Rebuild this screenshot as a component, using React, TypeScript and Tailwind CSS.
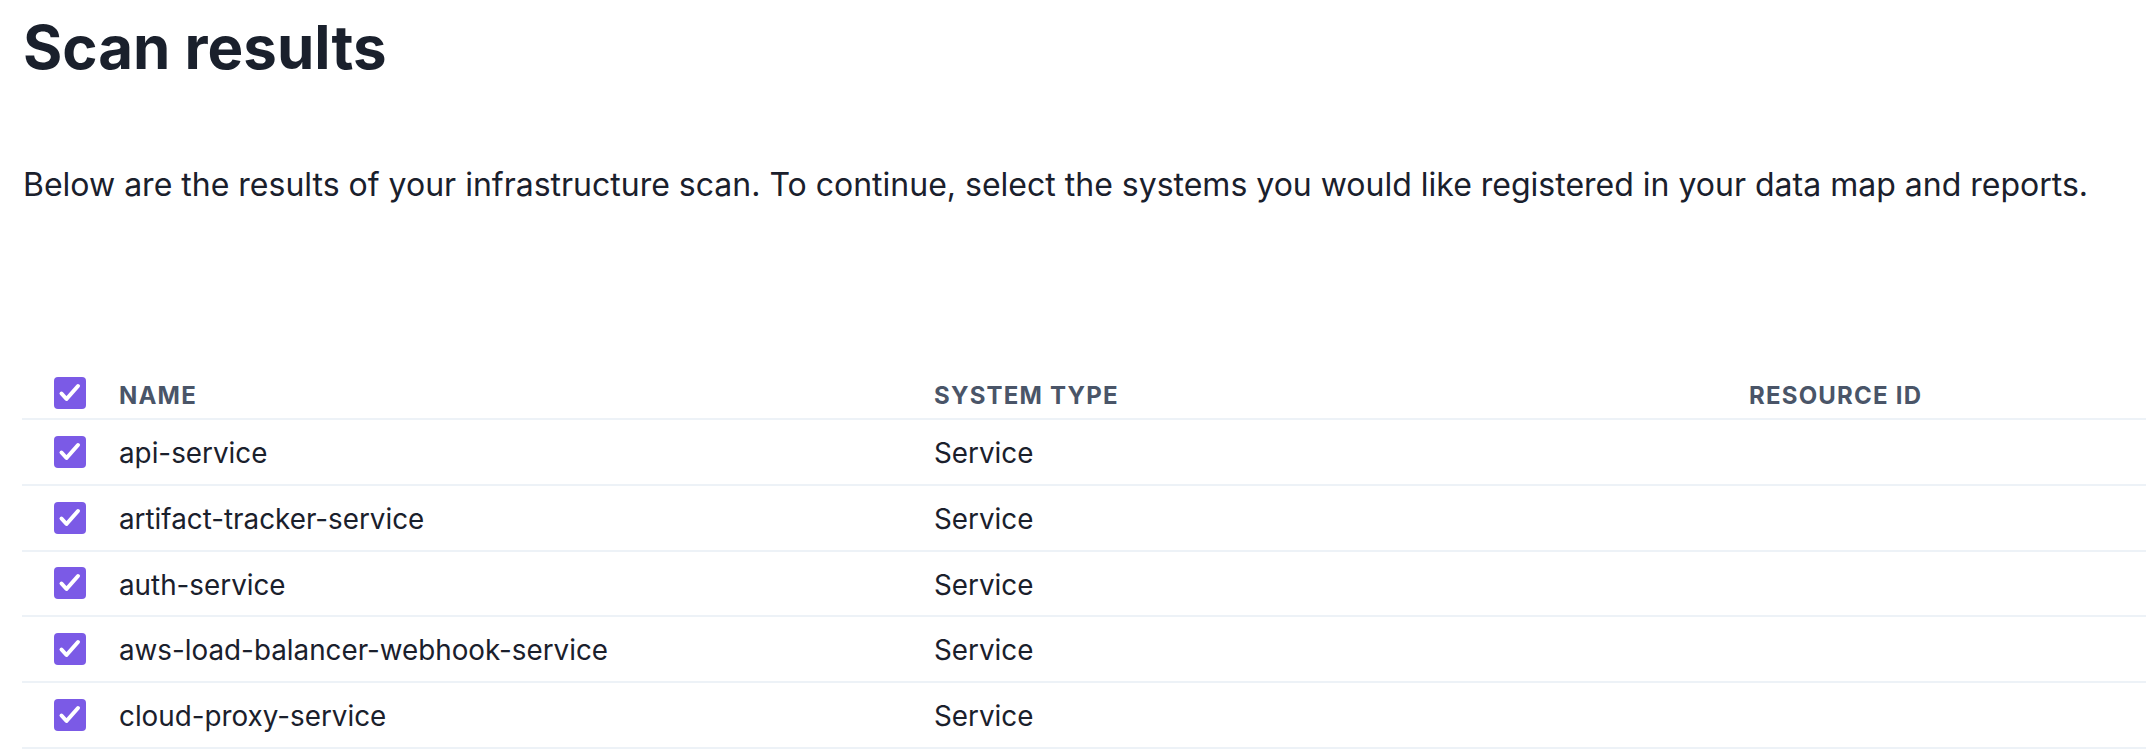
import { Fragment } from 'react';

const systems = [
  'api-service',
  'artifact-tracker-service',
  'auth-service',
  'aws-load-balancer-webhook-service',
  'cloud-proxy-service',
];

function Check() {
  return (
    <span className="flex h-[32px] w-[32px] shrink-0 items-center justify-center rounded-[4px] bg-[#7b5ae6]">
      <svg width="32" height="32" viewBox="0 0 32 32" fill="none">
        <path
          d="M7.5 16.5l5 5.5 11.5-13"
          stroke="white"
          strokeWidth="4"
          strokeLinecap="round"
          strokeLinejoin="round"
        />
      </svg>
    </span>
  );
}

export default function App() {
  return (
    <div className="h-[750px] w-full overflow-hidden bg-white font-['Inter','Liberation_Sans',sans-serif] text-[#1a202c]">
      <div className="pl-[23px]">
        <h1 className="pt-[11px] text-[60px] font-bold leading-[72px]">Scan results</h1>
        <p className="mt-[78px] text-[32px] leading-[48px]">
          Below are the results of your infrastructure scan. To continue, select the systems you would like
          registered in your data map and reports.
        </p>
      </div>

      {/* Results table */}
      <div className="ml-[22px] mt-[159px] w-[2600px]">
        <div className="grid grid-cols-[97px_815px_815px_815px]">
          <div className="flex h-[52px] items-center border-b-2 border-[#edf2f7] pl-[32px]">
            <Check />
          </div>
          {['NAME', 'SYSTEM TYPE', 'RESOURCE ID'].map((h) => (
            <div
              key={h}
              className="flex h-[52px] items-center border-b-2 border-[#edf2f7] pt-[6px] text-[24px] font-bold tracking-wider text-[#4a5568]"
            >
              {h}
            </div>
          ))}
          {systems.map((name) => (
            <Fragment key={name}>
              <div className="flex h-[65.75px] items-center border-b-2 border-[#edf2f7] pl-[32px]">
                <Check />
              </div>
              <div className="flex h-[65.75px] items-center border-b-2 border-[#edf2f7] pt-[4px] text-[27.8px]">
                {name}
              </div>
              <div className="flex h-[65.75px] items-center border-b-2 border-[#edf2f7] pt-[4px] text-[27.8px]">
                Service
              </div>
              <div className="h-[65.75px] border-b-2 border-[#edf2f7]" />
            </Fragment>
          ))}
        </div>
      </div>
    </div>
  );
}
